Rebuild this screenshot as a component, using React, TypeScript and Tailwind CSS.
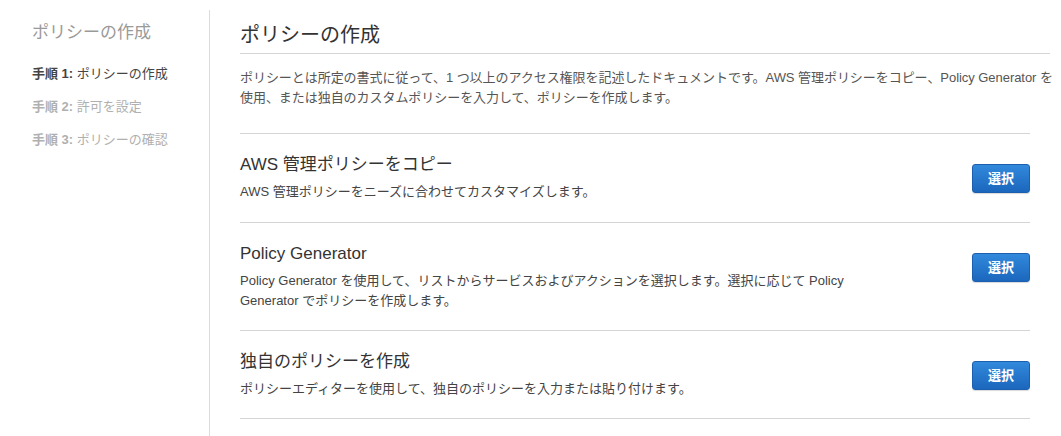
import React from 'react';
import clsx from 'clsx';

const font = { fontFamily: '"Liberation Sans", "Noto Sans CJK JP", sans-serif' };

interface Option {
  title: string;
  desc: React.ReactNode;
}

const options: Option[] = [
  {
    title: 'AWS 管理ポリシーをコピー',
    desc: 'AWS 管理ポリシーをニーズに合わせてカスタマイズします。',
  },
  {
    title: 'Policy Generator',
    desc: (
      <>
        Policy Generator を使用して、リストからサービスおよびアクションを選択します。選択に応じて Policy
        <br />
        Generator でポリシーを作成します。
      </>
    ),
  },
  {
    title: '独自のポリシーを作成',
    desc: 'ポリシーエディターを使用して、独自のポリシーを入力または貼り付けます。',
  },
];

const SelectButton = () => (
  <button className="mt-[11px] h-[29px] w-[58px] shrink-0 rounded-[3px] border border-[#1b5fae] bg-gradient-to-b from-[#3289dc] to-[#1b67bd] text-[13px] font-bold text-white shadow-[0_1px_1px_rgba(0,0,0,0.15)]">
    選択
  </button>
);

export default function App() {
  return (
    <div className="flex h-[436px] w-[1061px] overflow-hidden bg-white" style={font}>
      {/* サイドバー */}
      <aside className="mt-[10px] w-[210px] shrink-0 border-r border-[#dcdcdc] pl-[32px] pt-[11px]">
        <h2 className="text-[17px] leading-[24px] text-[#9a9a9a]">ポリシーの作成</h2>
        <ul className="mt-[19px] flex flex-col gap-[13px] text-[13px] leading-[20px]">
          <li className="text-[#444]">
            <span className="font-bold">手順 1:</span> ポリシーの作成
          </li>
          <li className="text-[#b0b0b0]">
            <span className="font-bold">手順 2:</span> 許可を設定
          </li>
          <li className="text-[#b0b0b0]">
            <span className="font-bold">手順 3:</span> ポリシーの確認
          </li>
        </ul>
      </aside>

      {/* メイン */}
      <main className="min-w-0 flex-1 pl-[30px] pr-[11px] pt-[22px]">
        <h1 className="border-b border-[#d5d5d5] pb-[5px] text-[20px] leading-[26px] text-[#333]">
          ポリシーの作成
        </h1>
        <p className="mt-[14px] whitespace-nowrap text-[13px] leading-[20px] tracking-[-0.05px] text-[#555]">
          ポリシーとは所定の書式に従って、1 つ以上のアクセス権限を記述したドキュメントです。AWS 管理ポリシーをコピー、Policy Generator を
          <br />
          使用、または独自のカスタムポリシーを入力して、ポリシーを作成します。
        </p>

        <div className="mr-[20px] mt-[25px] border-t border-[#d5d5d5]">
          {options.map((opt, i) => (
            <div
              key={opt.title}
              className={clsx(
                'flex items-start justify-between border-b border-[#d5d5d5] pt-[19px]',
                i === 0 ? 'pb-[20px]' : 'pb-[19px]'
              )}
            >
              <div>
                <h3 className="text-[17px] leading-[24px] text-[#333]">{opt.title}</h3>
                <p className="mt-[5px] text-[13px] leading-[20px] text-[#444]">{opt.desc}</p>
              </div>
              <SelectButton />
            </div>
          ))}
        </div>
      </main>
    </div>
  );
}
